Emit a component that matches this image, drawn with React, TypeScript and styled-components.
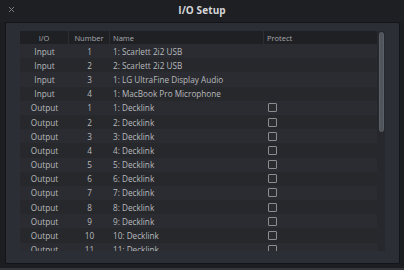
import React from "react";
import styled, { createGlobalStyle } from "styled-components";

const GlobalStyle = createGlobalStyle`
  html, body {
    margin: 0;
    padding: 0;
    background: #1b1c20;
  }
  body {
    font-family: "Open Sans", "Liberation Sans", sans-serif;
  }
`;

type Row = { io: string; num: number; name: string; protect: boolean };

const rows: Row[] = [
  { io: "Input", num: 1, name: "1: Scarlett 2i2 USB", protect: false },
  { io: "Input", num: 2, name: "2: Scarlett 2i2 USB", protect: false },
  { io: "Input", num: 3, name: "1: LG UltraFine Display Audio", protect: false },
  { io: "Input", num: 4, name: "1: MacBook Pro Microphone", protect: false },
  ...Array.from({ length: 11 }, (_, i) => ({
    io: "Output",
    num: i + 1,
    name: `${i + 1}: Decklink`,
    protect: true,
  })),
];

const Window = styled.div`
  width: 404px;
  height: 270px;
  box-sizing: border-box;
  display: flex;
  flex-direction: column;
  background: #1c1d21;
  border-bottom: 2px solid #34363b;
  overflow: hidden;
`;

const TitleBar = styled.div`
  height: 22px;
  flex: none;
  position: relative;
  display: flex;
  align-items: center;
  justify-content: center;
  background: #1e1f23;
`;

const Title = styled.div`
  font-size: 10px;
  font-weight: 700;
  color: #d6d6d8;
  letter-spacing: 0.1px;
  margin-top: -2px;
`;

const Close = styled.div`
  position: absolute;
  left: 7px;
  top: 5px;
  width: 9px;
  height: 9px;
  display: flex;
  align-items: center;
  justify-content: center;
`;

const Panel = styled.div`
  flex: 1;
  margin: 0 4px 4px 5px;
  border: 1px solid #131417;
  border-radius: 2px;
  background: #2b2e34;
  padding: 8px 14px 12px 14px;
  display: flex;
  min-height: 0;
`;

const Frame = styled.div`
  flex: 1;
  position: relative;
  background: #26282d;
  overflow: hidden;
  padding-right: 8px;
`;

const Table = styled.div`
  display: grid;
  grid-template-columns: 49px 41px 154px 1fr;
`;

const HeadCell = styled.div<{ $align?: string; $last?: boolean }>`
  height: 13px;
  display: flex;
  align-items: center;
  justify-content: ${({ $align }) => $align || "flex-start"};
  padding-left: ${({ $align }) => ($align ? "0" : "3px")};
  background: #1f2024;
  border-right: ${({ $last }) => ($last ? "none" : "1px solid #2c2e33")};
  font-size: 7.5px;
  color: #a8a9ad;
  box-sizing: border-box;
`;

const Cell = styled.div<{ $align?: string; $odd: boolean }>`
  height: 14.2px;
  display: flex;
  align-items: center;
  justify-content: ${({ $align }) => $align || "flex-start"};
  padding-left: ${({ $align }) => ($align ? "0" : "3px")};
  background: ${({ $odd }) => ($odd ? "#2a2c31" : "#26282c")};
  font-size: 8.2px;
  color: #b9babd;
  white-space: nowrap;
  box-sizing: border-box;
`;

const Check = styled.div`
  width: 7px;
  height: 7px;
  margin-left: 1px;
  border: 1px solid #8a8c90;
  border-radius: 1px;
  background: #2a2c30;
`;

const ScrollThumb = styled.div`
  position: absolute;
  right: 1px;
  top: 1px;
  width: 5px;
  height: 100px;
  border-radius: 2.5px;
  background: #50545b;
  border: 1px solid #5c6067;
  box-sizing: border-box;
`;

export default function App() {
  return (
    <>
      <GlobalStyle />
      <Window>
        <TitleBar>
          <Close>
            <svg width="7" height="7" viewBox="0 0 7 7">
              <path d="M1 1L6 6M6 1L1 6" stroke="#77797e" strokeWidth="1" />
            </svg>
          </Close>
          <Title>I/O Setup</Title>
        </TitleBar>
        <Panel>
          <Frame>
            <Table>
              <HeadCell $align="center">I/O</HeadCell>
              <HeadCell $align="center">Number</HeadCell>
              <HeadCell>Name</HeadCell>
              <HeadCell $last>Protect</HeadCell>
              {rows.map((r, i) => {
                const odd = i % 2 === 0;
                return (
                  <React.Fragment key={i}>
                    <Cell $align="center" $odd={odd}>{r.io}</Cell>
                    <Cell $align="center" $odd={odd}>{r.num}</Cell>
                    <Cell $odd={odd}>{r.name}</Cell>
                    <Cell $odd={odd}>{r.protect && <Check />}</Cell>
                  </React.Fragment>
                );
              })}
            </Table>
            <ScrollThumb />
          </Frame>
        </Panel>
      </Window>
    </>
  );
}
